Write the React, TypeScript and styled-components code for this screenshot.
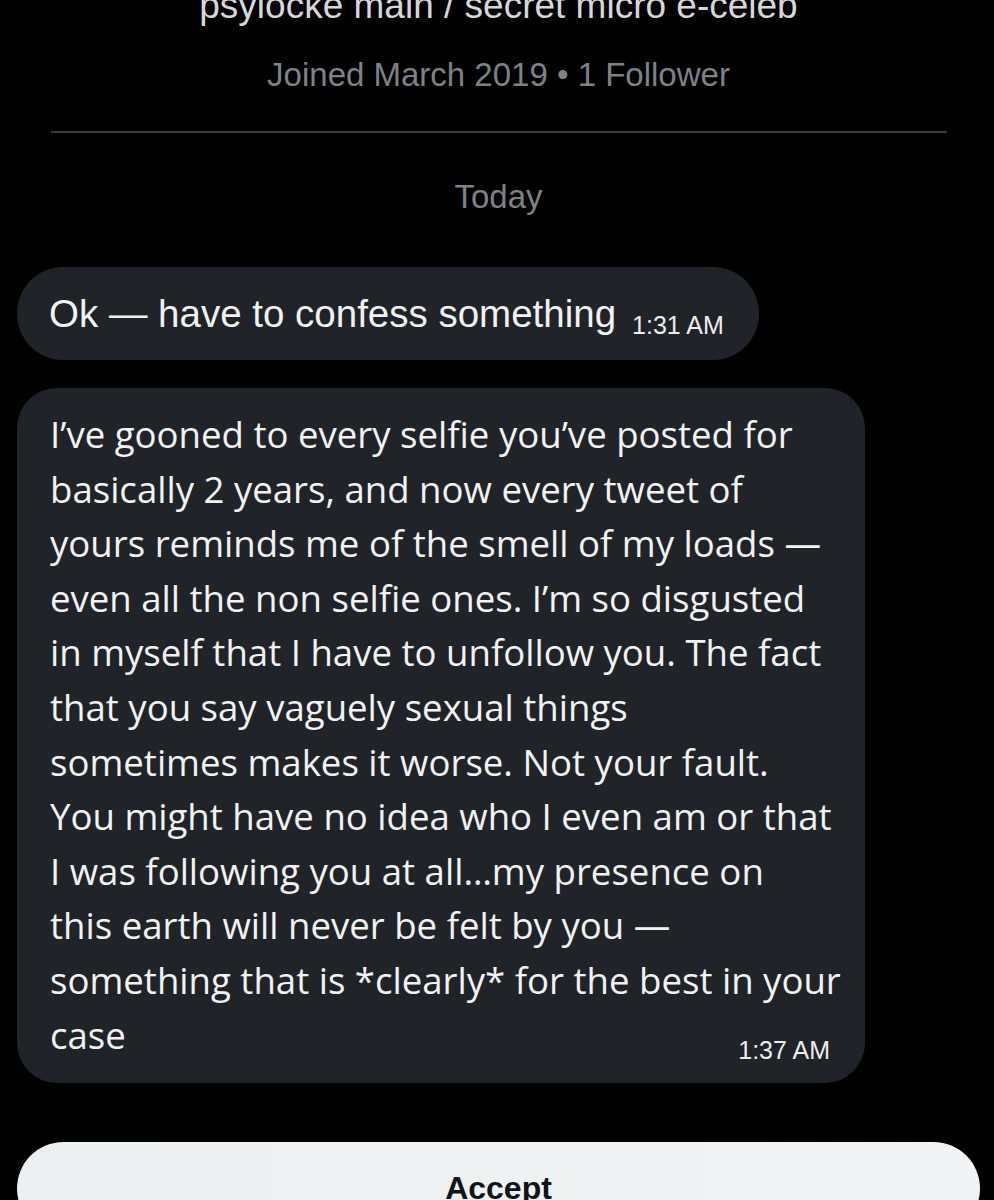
import React from 'react'
import styled, { createGlobalStyle } from 'styled-components'

const GlobalStyle = createGlobalStyle`
    html, body {
        margin: 0;
        padding: 0;
        background: #000;
    }
    body {
        font-family: "Liberation Sans", Arial, sans-serif;
        -webkit-font-smoothing: antialiased;
    }
`

const Page = styled.div`
    width: 994px;
    height: 1200px;
    overflow: hidden;
    background: #000;
    display: flex;
    flex-direction: column;
    padding: 0 14px 0 17px;
    box-sizing: border-box;
`

const Bio = styled.div`
    margin-top: -14px;
    text-align: center;
    font-size: 37px;
    line-height: 40px;
    color: #d6d7d8;
    white-space: nowrap;
`

const Meta = styled.div<{ top: number }>`
    margin-top: ${(p) => p.top}px;
    text-align: center;
    font-size: 33px;
    line-height: 40px;
    color: #7e8286;
`

const Divider = styled.div`
    margin: 36px 33px 0 34px;
    height: 2px;
    flex-shrink: 0;
    background: #393b3f;
`

const Bubble = styled.div<{ wide?: boolean }>`
    align-self: flex-start;
    box-sizing: border-box;
    background: #202327;
    color: #f1f2f3;
    border-radius: ${(p) => (p.wide ? 40 : 46)}px;
    width: ${(p) => (p.wide ? '848px' : 'auto')};
`

const ShortBubble = styled(Bubble)`
    margin-top: 50px;
    padding: 25px 35px 23px 32px;
    font-size: 38.5px;
    line-height: 44px;
    white-space: nowrap;
`

const LongBubble = styled(Bubble)`
    margin-top: 28px;
    padding: 19px 35px 21px 33px;
`

const Body = styled.div`
    font-family: "Open Sans", "Liberation Sans", sans-serif;
    font-size: 36.6px;
    line-height: 54.6px;
    white-space: pre;
`

const LastRow = styled.div`
    display: flex;
    justify-content: space-between;
    align-items: flex-end;
`

const Time = styled.span<{ inline?: boolean }>`
    font-family: "Liberation Sans", Arial, sans-serif;
    font-size: 25px;
    line-height: 24px;
    color: #eceded;
    margin-left: ${(p) => (p.inline ? 16 : 0)}px;
    vertical-align: ${(p) => (p.inline ? '-7px' : 'baseline')};
`

const AcceptButton = styled.button`
    margin-top: 59px;
    height: 93px;
    width: 963px;
    flex-shrink: 0;
    border: none;
    border-radius: 47px;
    background: linear-gradient(90deg, #eceff0, #f1f3f4);
    color: #0f1419;
    font-family: "Liberation Sans", Arial, sans-serif;
    font-weight: 700;
    font-size: 32px;
    padding: 0;
`

const lines = [
    'I’ve gooned to every selfie you’ve posted for',
    'basically 2 years, and now every tweet of',
    'yours reminds me of the smell of my loads —',
    'even all the non selfie ones. I’m so disgusted',
    'in myself that I have to unfollow you. The fact',
    'that you say vaguely sexual things',
    'sometimes makes it worse. Not your fault.',
    'You might have no idea who I even am or that',
    'I was following you at all…my presence on',
    'this earth will never be felt by you —',
    'something that is *clearly* for the best in your',
]

const App: React.FC = () => {
    return (
        <Page>
            <GlobalStyle />
            <Bio>psylocke main / secret micro e-celeb</Bio>
            <Meta top={29}>Joined March 2019 • 1 Follower</Meta>
            <Divider />
            <Meta top={44}>Today</Meta>

            <ShortBubble>
                Ok — have to confess something
                <Time inline>1:31 AM</Time>
            </ShortBubble>

            <LongBubble wide>
                <Body>{lines.join('\n')}</Body>
                <LastRow>
                    <Body>case</Body>
                    <Time>1:37 AM</Time>
                </LastRow>
            </LongBubble>

            <AcceptButton>Accept</AcceptButton>
        </Page>
    )
}

export default App
